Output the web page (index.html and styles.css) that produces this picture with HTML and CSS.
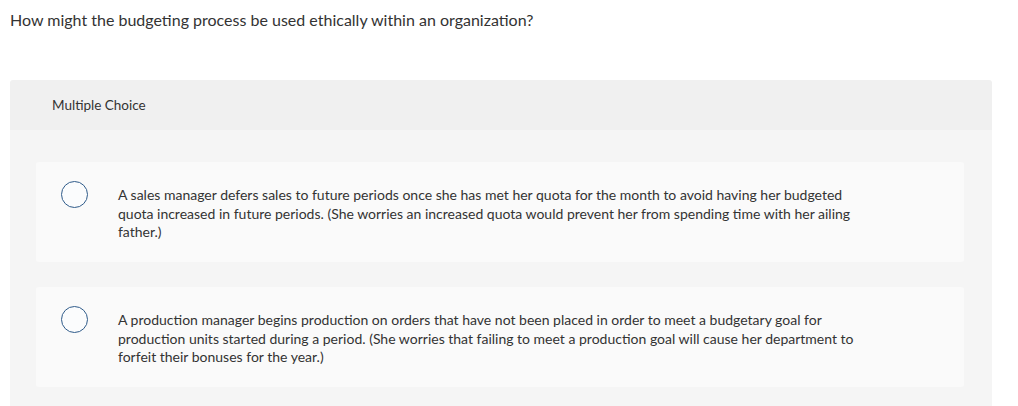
FILE: index.html
```html
<!DOCTYPE html>
<html>
<head>
<meta charset="utf-8">
<link rel="stylesheet" href="styles.css">
</head>
<body>
<p class="question">How might the budgeting process be used ethically within an organization?</p>
<div class="panel">
  <div class="panel-head">Multiple Choice</div>
  <div class="panel-body">
    <div class="choice">
      <span class="radio"></span>
      <p class="choice-text">A sales manager defers sales to future periods once she has met her quota for the month to avoid having her budgeted quota increased in future periods. (She worries an increased quota would prevent her from spending time with her ailing father.)</p>
    </div>
    <div class="choice">
      <span class="radio"></span>
      <p class="choice-text">A production manager begins production on orders that have not been placed in order to meet a budgetary goal for production units started during a period. (She worries that failing to meet a production goal will cause her department to forfeit their bonuses for the year.)</p>
    </div>
  </div>
</div>
</body>
</html>
```
FILE: styles.css
```css
html, body {
  margin: 0;
  padding: 0;
  background: #fff;
}
body {
  padding: 0 26px 0 10px;
  font-family: "Lato", "Open Sans", sans-serif;
  color: #333;
}
.question {
  margin: 0;
  padding-top: 10px;
  height: 70px;
  font-size: 16px;
  line-height: 19px;
  color: #333;
}
.panel {
  border-radius: 3px 3px 0 0;
  overflow: hidden;
}
.panel-head {
  background: #f0f0f0;
  height: 50px;
  display: flex;
  align-items: center;
  padding-left: 42px;
  font-size: 13.5px;
  color: #333;
}
.panel-body {
  background: #f5f5f5;
  padding: 32px 28px 20px 26px;
  display: flex;
  flex-direction: column;
  gap: 25px;
}
.choice {
  background: #fafafa;
  border-radius: 3px;
  min-height: 100px;
  box-sizing: border-box;
  padding: 19px 20px 10px 25px;
  display: flex;
  gap: 30px;
}
.radio {
  flex: none;
  width: 25px;
  height: 25px;
  border: 1.5px solid #2f5b8a;
  border-radius: 50%;
  background: #fbfcfd;
}
.choice-text {
  margin: 5px 0 0;
  max-width: 740px;
  font-size: 14px;
  line-height: 18.5px;
  color: #333;
}
```
